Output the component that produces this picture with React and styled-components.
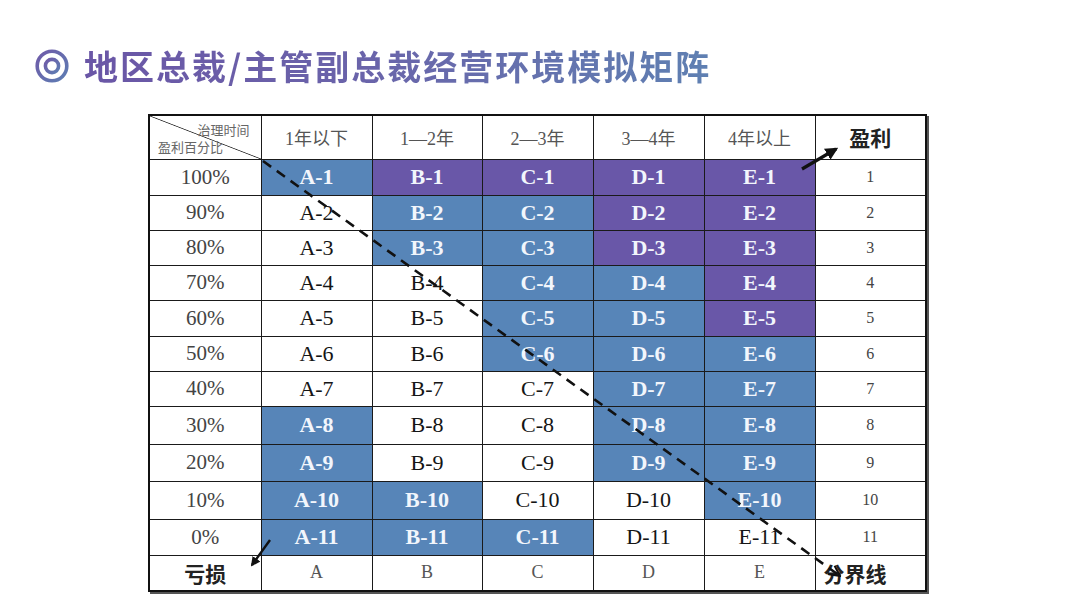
import React from 'react';
import styled, { createGlobalStyle } from 'styled-components';

const GlobalStyle = createGlobalStyle`
  html, body {
    margin: 0;
    padding: 0;
    background: #ffffff;
  }
  body {
    width: 1080px;
    height: 608px;
    overflow: hidden;
    font-family: "Liberation Serif", "Noto Sans CJK SC", serif;
  }
`;

const Page = styled.div`
  display: flex;
  flex-direction: column;
  padding: 46px 0 0 35px;
`;

const TitleRow = styled.div`
  display: flex;
  align-items: center;
  gap: 15px;
  height: 40px;
`;

const Title = styled.h1`
  margin: 0;
  font-family: "Noto Sans CJK SC", "Noto Sans", sans-serif;
  font-size: 34px;
  font-weight: 700;
  letter-spacing: 2px;
  line-height: 40px;
  background: linear-gradient(90deg, #6a56a6 0%, #6a64aa 45%, #5f80b2 100%);
  -webkit-background-clip: text;
  background-clip: text;
  color: transparent;
`;

const MatrixWrap = styled.div`
  position: relative;
  align-self: flex-start;
  margin: 28px 0 0 113px;
  box-shadow: 2px 2px 0 #555;
`;

const Matrix = styled.table`
  border-collapse: collapse;
  table-layout: fixed;
  width: 777px;
  border: 2px solid #111;
`;

const Row = styled.tr`
  height: ${p => p.h}px;
`;

const Cell = styled.td`
  border: 1.5px solid #1a1a1a;
  padding: 0;
  text-align: ${p => p.align || 'center'};
  padding-left: ${p => (p.align === 'left' ? '8px' : '0')};
  vertical-align: middle;
  font-family: "Liberation Serif", "Noto Sans CJK SC", serif;
  font-size: 22px;
  color: #151515;
  background: ${p =>
    p.tone === 'b' ? '#5785b8' : p.tone === 'p' ? '#6957a8' : '#ffffff'};
  ${p =>
    p.tone === 'b' || p.tone === 'p'
      ? 'color: #f2f6fc; font-weight: 700;'
      : ''}
`;

const LabelCell = styled(Cell)`
  color: #444;
  font-size: 21px;
`;

const HeadCell = styled(Cell)`
  color: #555;
  font-size: 18px;
`;

const StrongCell = styled(Cell)`
  color: #222;
  font-size: 21px;
  font-weight: 700;
  font-family: "Noto Sans CJK SC", serif;
`;

const NumCell = styled(Cell)`
  color: #444;
  font-size: 16px;
`;

const LetterCell = styled(Cell)`
  color: #555;
  font-size: 18px;
`;

const CornerCell = styled.td`
  position: relative;
  border: 1.5px solid #1a1a1a;
  padding: 0;
  background: linear-gradient(
    to top right,
    transparent calc(50% - 0.8px),
    #333 50%,
    transparent calc(50% + 0.8px)
  );
`;

const CornerText = styled.span`
  position: absolute;
  font-family: "Noto Sans CJK SC", sans-serif;
  font-size: 13px;
  color: #666;
  line-height: 1;
  ${p => (p.top ? 'top: 7px; right: 11px;' : 'bottom: 6px; left: 8px;')}
`;

const Overlay = styled.svg`
  position: absolute;
  left: 0;
  top: 0;
  overflow: visible;
  pointer-events: none;
`;

const Ring = () => (
  <svg width="34" height="36" viewBox="0 0 34 36">
    <defs>
      <linearGradient id="ringGrad" x1="0" y1="0" x2="1" y2="1">
        <stop offset="0%" stopColor="#6f5aa8" />
        <stop offset="100%" stopColor="#5d7db3" />
      </linearGradient>
    </defs>
    <circle cx="17" cy="18" r="14.8" fill="none" stroke="url(#ringGrad)" strokeWidth="3.6" />
    <circle cx="17" cy="18" r="6.6" fill="none" stroke="url(#ringGrad)" strokeWidth="3.6" />
  </svg>
);

const years = ['1年以下', '1—2年', '2—3年', '3—4年', '4年以上'];
const letters = ['A', 'B', 'C', 'D', 'E'];

// b = blue, p = purple, w = white; one letter per column A..E
const rows = [
  { label: '100%', tones: 'bpppp', h: 36 },
  { label: '90%', tones: 'wbbpp', h: 35 },
  { label: '80%', tones: 'wbbpp', h: 35 },
  { label: '70%', tones: 'wwbbp', h: 35 },
  { label: '60%', tones: 'wwbbp', h: 36 },
  { label: '50%', tones: 'wwbbb', h: 35 },
  { label: '40%', tones: 'wwwbb', h: 35 },
  { label: '30%', tones: 'bwwbb', h: 38 },
  { label: '20%', tones: 'bwwbb', h: 37 },
  { label: '10%', tones: 'bbwwb', h: 38 },
  { label: '0%', tones: 'bbbww', h: 36 }
];

const widths = [112, 111, 110, 111, 111, 111, 111];

const App = () => {
  return (
    <>
      <GlobalStyle />
      <Page>
        <TitleRow>
          <Ring />
          <Title>地区总裁/主管副总裁经营环境模拟矩阵</Title>
        </TitleRow>
        <MatrixWrap>
          <Matrix>
            <colgroup>
              {widths.map((w, i) => (
                <col key={i} style={{ width: w }} />
              ))}
            </colgroup>
            <tbody>
              <Row h={44}>
                <CornerCell>
                  <CornerText top>治理时间</CornerText>
                  <CornerText>盈利百分比</CornerText>
                </CornerCell>
                {years.map(y => (
                  <HeadCell key={y}>{y}</HeadCell>
                ))}
                <StrongCell>盈利</StrongCell>
              </Row>
              {rows.map((r, ri) => (
                <Row key={r.label} h={r.h}>
                  <LabelCell>{r.label}</LabelCell>
                  {letters.map((l, li) => (
                    <Cell key={l} tone={r.tones[li]}>
                      {`${l}-${ri + 1}`}
                    </Cell>
                  ))}
                  <NumCell>{ri + 1}</NumCell>
                </Row>
              ))}
              <Row h={36}>
                <StrongCell>亏损</StrongCell>
                {letters.map(l => (
                  <LetterCell key={l}>{l}</LetterCell>
                ))}
                <StrongCell align="left">分界线</StrongCell>
              </Row>
            </tbody>
          </Matrix>
          <Overlay width="777" height="476">
            <defs>
              <marker
                id="head"
                viewBox="0 0 10 10"
                refX="8"
                refY="5"
                markerWidth="4"
                markerHeight="4"
                orient="auto"
              >
                <path d="M0 0 L10 5 L0 10 Z" fill="#111" />
              </marker>
              <marker
                id="thin"
                viewBox="0 0 10 10"
                refX="9"
                refY="5"
                markerWidth="5"
                markerHeight="5"
                orient="auto"
              >
                <path d="M1 1 L9 5 L1 9" fill="none" stroke="#111" strokeWidth="1.6" />
              </marker>
            </defs>
            <line
              x1="115"
              y1="47"
              x2="692"
              y2="462"
              stroke="#111"
              strokeWidth="2.6"
              strokeDasharray="10 7"
              markerEnd="url(#thin)"
            />
            <line
              x1="654"
              y1="55"
              x2="688"
              y2="35"
              stroke="#111"
              strokeWidth="3.2"
              markerEnd="url(#head)"
            />
            <line
              x1="122"
              y1="426"
              x2="104"
              y2="451"
              stroke="#111"
              strokeWidth="2.4"
              markerEnd="url(#head)"
            />
          </Overlay>
        </MatrixWrap>
      </Page>
    </>
  );
};

export default App;
